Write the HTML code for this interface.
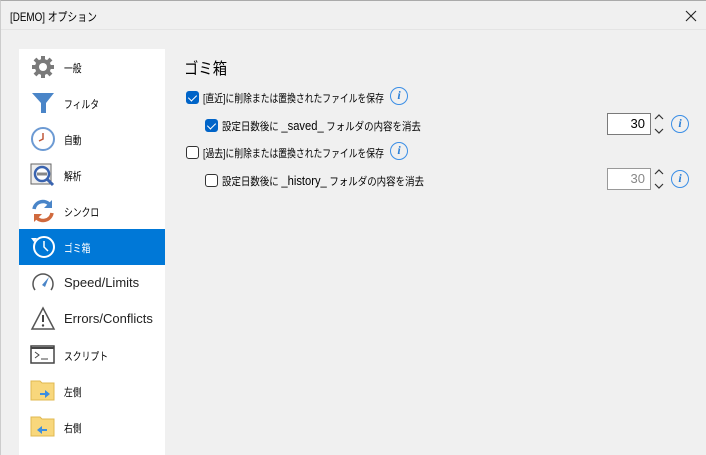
<!DOCTYPE html>
<html><head><meta charset="utf-8">
<style>
*{margin:0;padding:0;box-sizing:border-box}
body{width:706px;height:455px;overflow:hidden;background:#f0f0f0;font-family:"Liberation Sans","Noto Sans CJK JP",sans-serif;font-size:11px;color:#000;position:relative}
.win{position:absolute;left:0;top:0;width:706px;height:455px;border-top:1px solid #aaa;border-left:1px solid #ccc}
.title{position:absolute;left:0;top:0;width:706px;height:29px;border-bottom:1px solid #e4e4e4;background:#f0f0f0}
.title span{position:absolute;left:9px;top:7px;font-size:12px;transform:scaleX(0.82);transform-origin:left;white-space:nowrap}
.side{position:absolute;left:19px;top:49px;width:146px;height:406px;background:#fff}
.item{position:absolute;left:0;width:146px;height:36px}
.item .ic{position:absolute;left:11px;top:5px;width:26px;height:26px}
.item .t{position:absolute;left:45px;top:11px;font-size:11px;transform:scaleX(0.8);transform-origin:left;white-space:nowrap}
.item .t.en{font-size:13px;top:10px;color:#222;transform:none}
.sel{background:#0078d7;color:#fff}
.abs{position:absolute;white-space:nowrap;transform-origin:left}
.cb{position:absolute;width:13px;height:13px;border:1px solid #333;border-radius:3px;background:#fff}
.cb.on{background:#0064c8;border-color:#0064c8}
.cb.on:after{content:"";position:absolute;left:3px;top:1px;width:4px;height:7px;border:solid #fff;border-width:0 1.5px 1.5px 0;transform:rotate(45deg)}
.info{position:absolute;width:18px;height:18px;border:1.5px solid #3a8ee6;border-radius:50%;color:#2a7ed6;font:italic bold 12px "Liberation Serif",serif;text-align:center;line-height:15px}
.num{position:absolute;width:44px;height:22px;border:1px solid #7a7a7a;background:#fff;text-align:right;padding-right:5px;font-size:13px;line-height:20px}
.spin{position:absolute;width:10px;height:22px}
</style></head><body>
<div class="win">
<div class="title"><span>[DEMO] オプション</span>
<svg style="position:absolute;left:684px;top:9px" width="12" height="12" viewBox="0 0 12 12"><path d="M1 1L11 11M11 1L1 11" stroke="#222" stroke-width="1.1"/></svg></div>
</div>
<div class="side">
 <div class="item" style="top:0"><svg class="ic" viewBox="0 0 26 26"><g fill="#7a7a7a"><circle cx="13" cy="13" r="8"/><g stroke="#7a7a7a" stroke-width="4"><line x1="13" y1="2" x2="13" y2="24"/><line x1="2" y1="13" x2="24" y2="13"/><line x1="5" y1="5" x2="21" y2="21"/><line x1="21" y1="5" x2="5" y2="21"/></g></g><circle cx="13" cy="13" r="4" fill="#fff"/></svg><div class="t">一般</div></div>
 <div class="item" style="top:36px"><svg class="ic" viewBox="0 0 26 26"><path d="M2 3H24L16 13V23H11V13Z" fill="#4a85c8"/></svg><div class="t">フィルタ</div></div>
 <div class="item" style="top:72px"><svg class="ic" viewBox="0 0 26 26"><circle cx="13" cy="13" r="11" fill="#fff" stroke="#6c9ad3" stroke-width="2"/><path d="M13 7V13L9 15" stroke="#c0583a" stroke-width="1.5" fill="none"/></svg><div class="t">自動</div></div>
 <div class="item" style="top:108px"><svg class="ic" viewBox="0 0 26 26"><rect x="1" y="2" width="20" height="20" fill="#eee" stroke="#666"/><circle cx="12" cy="12" r="7" fill="#fff" stroke="#3a64b0" stroke-width="2.5"/><line x1="7" y1="12" x2="17" y2="12" stroke="#888" stroke-width="3"/><line x1="17" y1="17" x2="23" y2="23" stroke="#3a64b0" stroke-width="3"/></svg><div class="t">解析</div></div>
 <div class="item" style="top:144px"><svg class="ic" viewBox="0 0 26 26"><path d="M4 11A9 9 0 0 1 20 7" stroke="#4a85c8" stroke-width="3.5" fill="none"/><path d="M22 2V10H14Z" fill="#4a85c8"/><path d="M22 15A9 9 0 0 1 6 19" stroke="#d06a3e" stroke-width="3.5" fill="none"/><path d="M4 24V16H12Z" fill="#d06a3e"/></svg><div class="t">シンクロ</div></div>
 <div class="item sel" style="top:180px"><svg class="ic" viewBox="0 0 26 26"><circle cx="14" cy="13" r="10" fill="none" stroke="#fff" stroke-width="2"/><path d="M14 7V13L18 17" stroke="#fff" stroke-width="1.5" fill="none"/><path d="M1 4L7 4L4 8Z" fill="#fff"/></svg><div class="t">ゴミ箱</div></div>
 <div class="item" style="top:216px"><svg class="ic" viewBox="0 0 26 26"><path d="M5 20A10 10 0 1 1 21 20" stroke="#555" stroke-width="1.5" fill="none"/><path d="M12 15L19 7L15 17Z" fill="#4a85c8"/></svg><div class="t en">Speed/Limits</div></div>
 <div class="item" style="top:252px"><svg class="ic" viewBox="0 0 26 26"><path d="M13 2L24 23H2Z" stroke="#555" stroke-width="1.5" fill="#fff"/><line x1="13" y1="9" x2="13" y2="16" stroke="#444" stroke-width="2"/><circle cx="13" cy="19.5" r="1.2" fill="#444"/></svg><div class="t en">Errors/Conflicts</div></div>
 <div class="item" style="top:288px"><svg class="ic" viewBox="0 0 26 26"><rect x="1" y="4" width="23" height="17" fill="#fff" stroke="#444" stroke-width="1.5"/><line x1="1" y1="6" x2="24" y2="6" stroke="#444" stroke-width="2"/><path d="M5 10L9 13L5 16" stroke="#444" fill="none"/><line x1="11" y1="17" x2="18" y2="17" stroke="#444"/></svg><div class="t">スクリプト</div></div>
 <div class="item" style="top:324px"><svg class="ic" viewBox="0 0 26 26"><path d="M1 3H10L12 5H24V22H1Z" fill="#f8d77c" stroke="#e0b850"/><path d="M10 15H15V12L20 16L15 20V17H10Z" fill="#3c8ee0"/></svg><div class="t">左側</div></div>
 <div class="item" style="top:360px"><svg class="ic" viewBox="0 0 26 26"><path d="M1 3H10L12 5H24V22H1Z" fill="#f8d77c" stroke="#e0b850"/><path d="M17 15H12V12L7 16L12 20V17H17Z" fill="#3c8ee0"/></svg><div class="t">右側</div></div>
</div>
<div class="abs" style="left:184px;top:55px;font-size:16px;transform:scaleX(0.9)">ゴミ箱</div>
<div class="cb on" style="left:186px;top:91px"></div>
<div class="abs" style="left:203px;top:90px;transform:scaleX(0.8)">[直近]に削除または置換されたファイルを保存</div>
<div class="info" style="left:390px;top:87px">i</div>
<div class="cb on" style="left:205px;top:119px"></div>
<div class="abs" style="left:222px;top:118px;transform:scaleX(0.86)">設定日数後に <span style="font-size:13px">_saved_</span> フォルダの内容を消去</div>
<div class="num" style="left:607px;top:113px">30</div>
<svg class="spin" style="left:654px;top:113px" viewBox="0 0 10 22"><path d="M1 6L5 2L9 6M1 16L5 20L9 16" stroke="#333" fill="none" stroke-width="1.2"/></svg>
<div class="info" style="left:671px;top:115px">i</div>
<div class="cb" style="left:186px;top:146px"></div>
<div class="abs" style="left:203px;top:145px;transform:scaleX(0.8)">[過去]に削除または置換されたファイルを保存</div>
<div class="info" style="left:390px;top:142px">i</div>
<div class="cb" style="left:205px;top:174px"></div>
<div class="abs" style="left:222px;top:173px;transform:scaleX(0.86)">設定日数後に <span style="font-size:13px">_history_</span> フォルダの内容を消去</div>
<div class="num" style="left:607px;top:168px;color:#888;border-color:#999">30</div>
<svg class="spin" style="left:654px;top:168px" viewBox="0 0 10 22"><path d="M1 6L5 2L9 6M1 16L5 20L9 16" stroke="#333" fill="none" stroke-width="1.2"/></svg>
<div class="info" style="left:671px;top:170px">i</div>
</body></html>
